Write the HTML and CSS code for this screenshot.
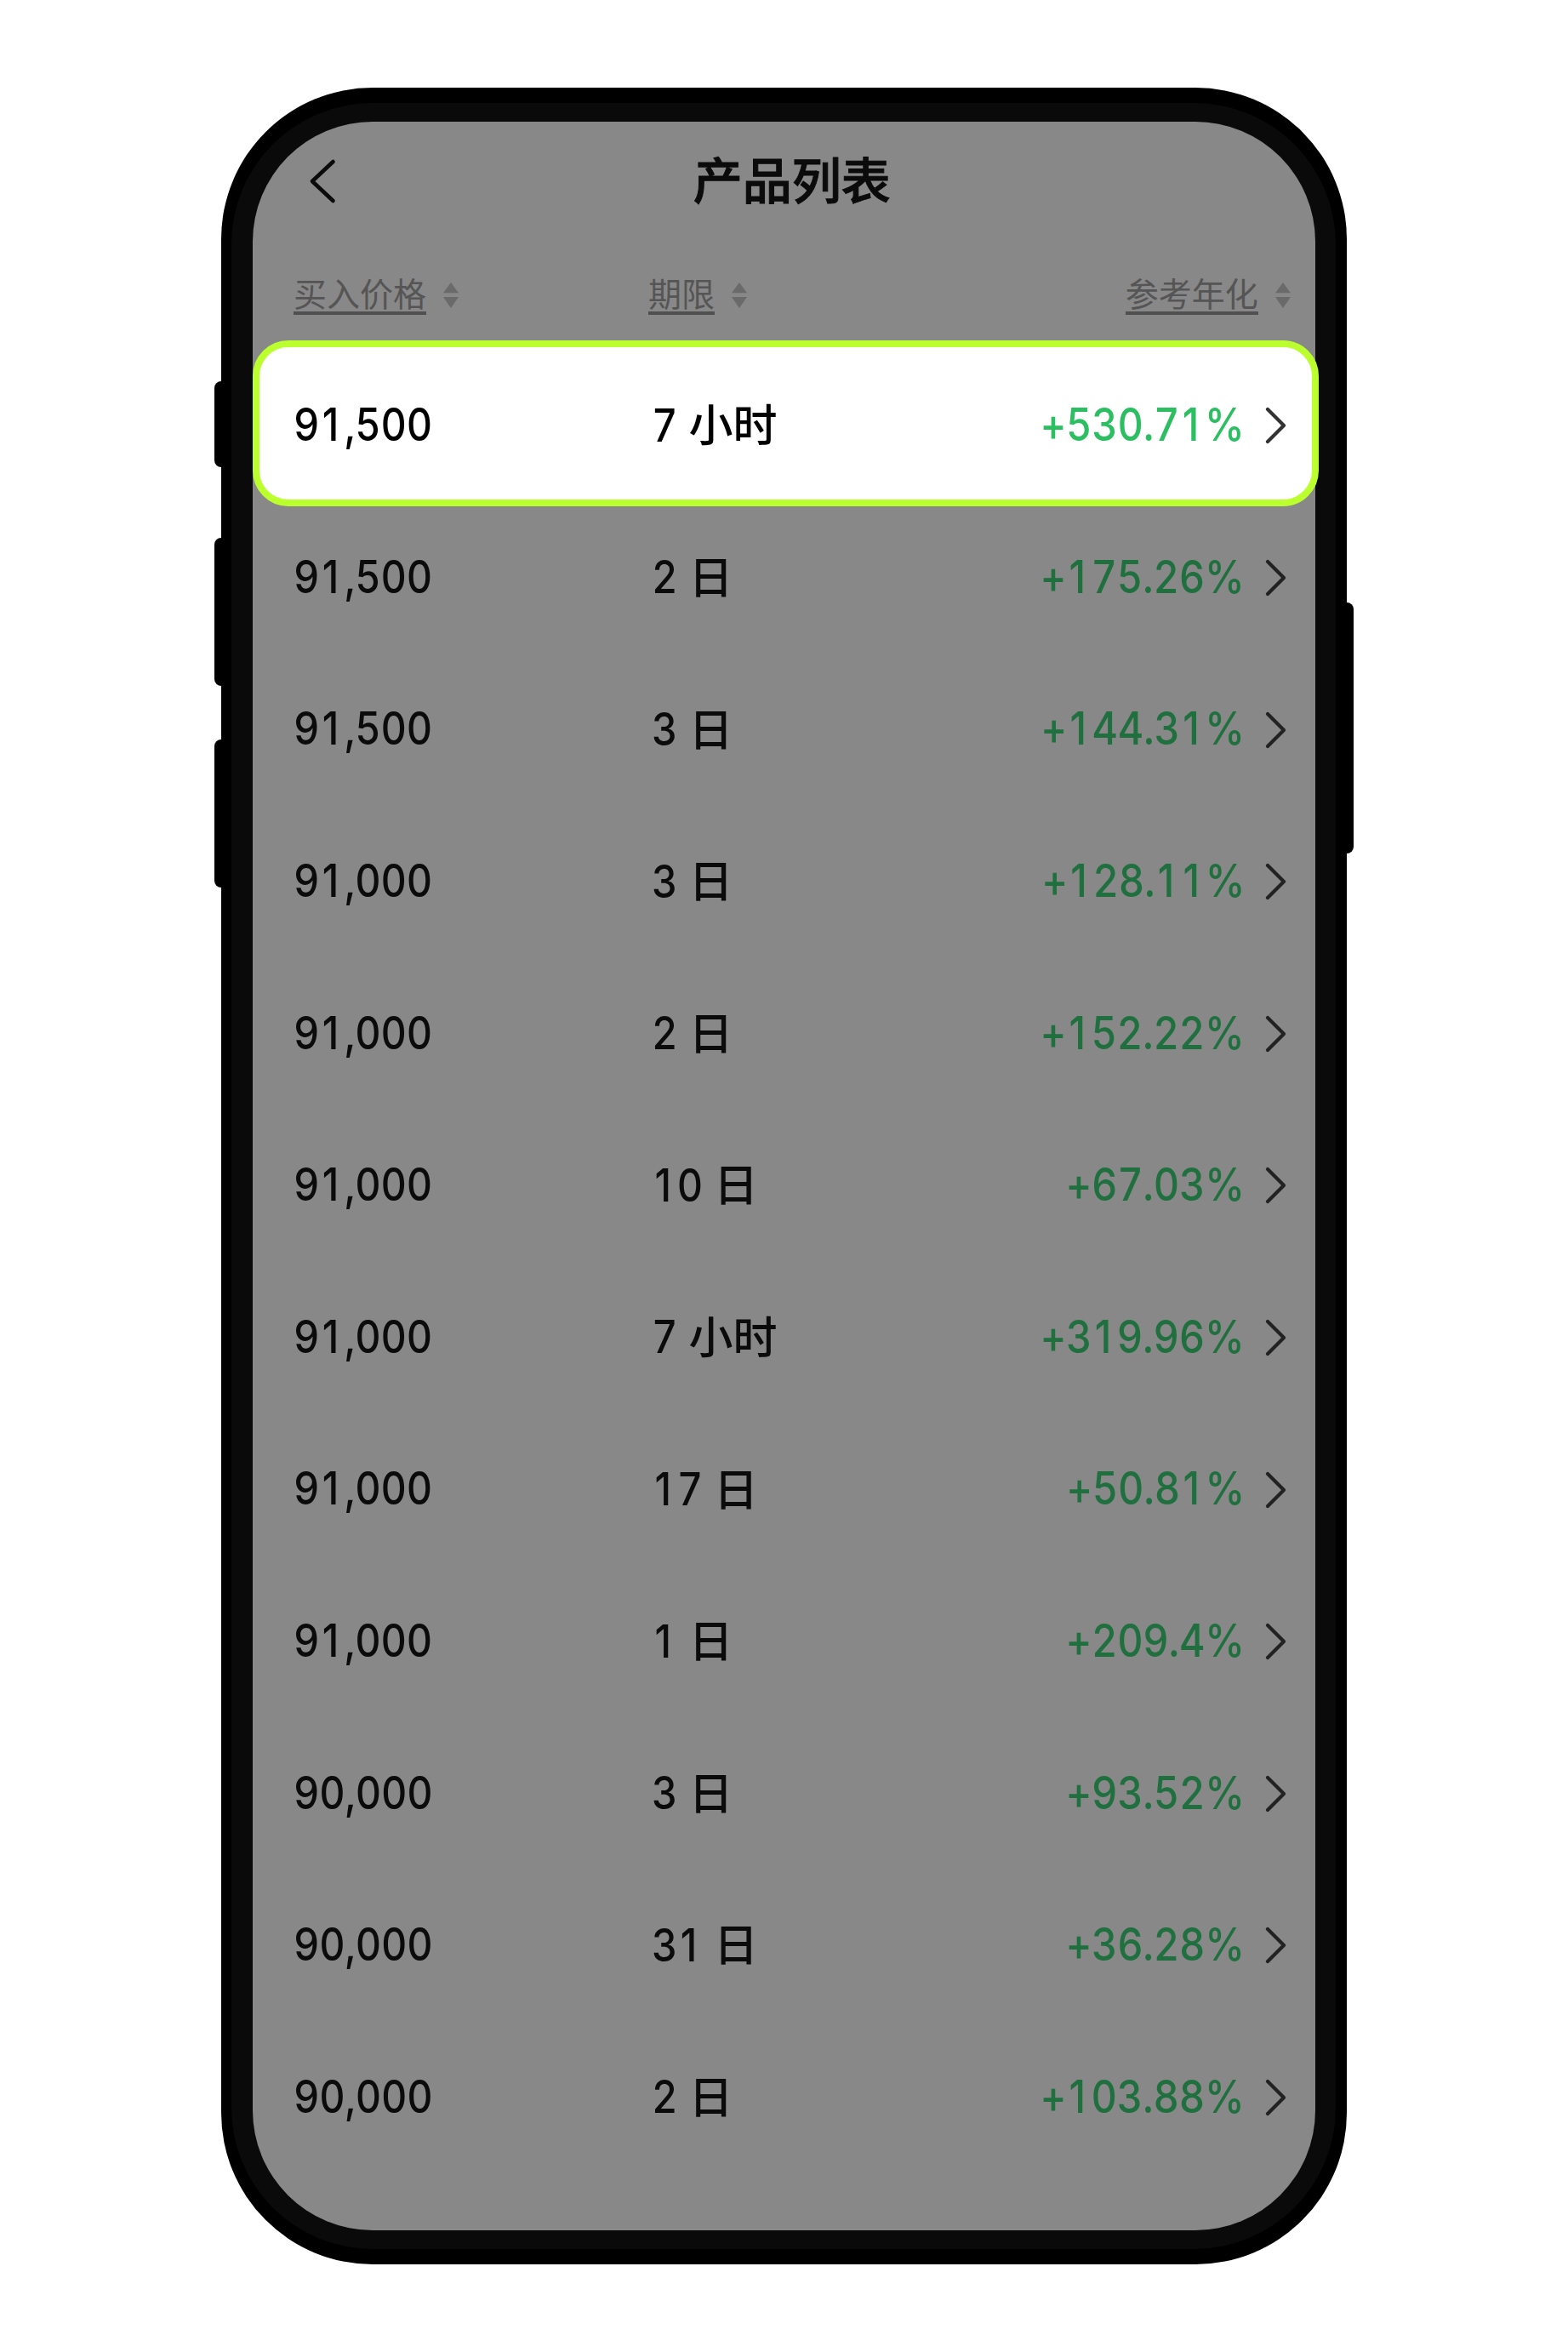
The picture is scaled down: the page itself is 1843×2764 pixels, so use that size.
FILE: index.html
```
<!DOCTYPE html>
<html lang="zh-CN">
<head>
<meta charset="utf-8">
<title>产品列表</title>
<link rel="stylesheet" href="styles.css">
</head>
<body>
<svg class="defs" aria-hidden="true">
  <symbol id="chevron" viewBox="0 0 28 46"><path d="M4 4 L23 23 L4 42"/></symbol>
  <symbol id="sort" viewBox="0 0 18 30"><path d="M9 0 L18 12.3 H0 Z M0 17 H18 L9 30 Z"/></symbol>
</svg>
<main class="phone">
  <i class="key key-mute"></i><i class="key key-up"></i><i class="key key-down"></i><i class="key key-power"></i>
  <div class="bezel">
    <div class="screen">
      <header class="bar">
        <svg class="back" viewBox="0 0 32 54"><path d="M28.5 4 L4 27 L28.5 50"/></svg>
        <h1>产品列表</h1>
      </header>
      <div class="heads">
        <div class="head"><u>买入价格</u><svg class="sort"><use href="#sort"/></svg></div>
        <div class="head"><u>期限</u><svg class="sort"><use href="#sort"/></svg></div>
        <div class="head"><u>参考年化</u><svg class="sort"><use href="#sort"/></svg></div>
      </div>
      <div class="list">
        <div class="row active"><span class="num">9<i>1</i>,500</span><span class="term"><b class="num">7</b>小时</span><span class="num rate">+530.7<i>1</i>%</span><svg class="go"><use href="#chevron"/></svg></div>
        <div class="row"><span class="num">9<i>1</i>,500</span><span class="term"><b class="num">2</b>日</span><span class="num rate">+<i>1</i>75.26%</span><svg class="go"><use href="#chevron"/></svg></div>
        <div class="row"><span class="num">9<i>1</i>,500</span><span class="term"><b class="num">3</b>日</span><span class="num rate">+<i>1</i>44.3<i>1</i>%</span><svg class="go"><use href="#chevron"/></svg></div>
        <div class="row"><span class="num">9<i>1</i>,000</span><span class="term"><b class="num">3</b>日</span><span class="num rate">+<i>1</i>28.<i>1</i><i>1</i>%</span><svg class="go"><use href="#chevron"/></svg></div>
        <div class="row"><span class="num">9<i>1</i>,000</span><span class="term"><b class="num">2</b>日</span><span class="num rate">+<i>1</i>52.22%</span><svg class="go"><use href="#chevron"/></svg></div>
        <div class="row"><span class="num">9<i>1</i>,000</span><span class="term"><b class="num two"><i>1</i>0</b>日</span><span class="num rate">+67.03%</span><svg class="go"><use href="#chevron"/></svg></div>
        <div class="row"><span class="num">9<i>1</i>,000</span><span class="term"><b class="num">7</b>小时</span><span class="num rate">+3<i>1</i>9.96%</span><svg class="go"><use href="#chevron"/></svg></div>
        <div class="row"><span class="num">9<i>1</i>,000</span><span class="term"><b class="num two"><i>1</i>7</b>日</span><span class="num rate">+50.8<i>1</i>%</span><svg class="go"><use href="#chevron"/></svg></div>
        <div class="row"><span class="num">9<i>1</i>,000</span><span class="term"><b class="num"><i>1</i></b>日</span><span class="num rate">+209.4%</span><svg class="go"><use href="#chevron"/></svg></div>
        <div class="row"><span class="num">90,000</span><span class="term"><b class="num">3</b>日</span><span class="num rate">+93.52%</span><svg class="go"><use href="#chevron"/></svg></div>
        <div class="row"><span class="num">90,000</span><span class="term"><b class="num two">3<i>1</i></b>日</span><span class="num rate">+36.28%</span><svg class="go"><use href="#chevron"/></svg></div>
        <div class="row"><span class="num">90,000</span><span class="term"><b class="num">2</b>日</span><span class="num rate">+<i>1</i>03.88%</span><svg class="go"><use href="#chevron"/></svg></div>
      </div>
    </div>
  </div>
</main>
</body>
</html>
```
FILE: styles.css
```
* { box-sizing: border-box; }
body {
  margin: 0;
  padding: 102.5px 0 0 260px;
  height: 2764px;
  overflow: hidden;
  background: #fff;
  color: #0b0b0b;
  font-family: "Noto Sans CJK SC", sans-serif;
}
.defs { position: absolute; width: 0; height: 0; }
.phone {
  position: relative;
  width: 1322.6px;
  height: 2558.6px;
  padding: 18px 12.3px;
  border-radius: 178px;
  background: #000;
}
.key { position: absolute; width: 20px; border-radius: 8px; background: #000; left: -8.5px; }
.key-mute { top: 345px; height: 101px; }
.key-up { top: 529.5px; height: 174px; }
.key-down { top: 766.5px; height: 174px; }
.key-power { left: auto; right: -8.5px; top: 605.5px; height: 294.5px; }
.bezel {
  height: 100%;
  padding: 22.5px 24.6px;
  border-radius: 166px;
  background: #0a0a0a;
  position: relative;
}
.screen { height: 100%; border-radius: 141px; background: #888; }
.bar {
  display: grid;
  grid-template-columns: 74px 1fr 117px;
  align-items: center;
  height: 138px;
  padding: 0 4px 0 66px;
}
.back { width: 32px; height: 54px; margin-top: 1px; }
.back path, #chevron path { fill: none; stroke: currentColor; stroke-linecap: round; stroke-linejoin: round; }
.back path { stroke-width: 4.6; }
#chevron path { stroke-width: 4.2; }
h1 {
  margin: 0;
  padding-bottom: 6px;
  text-align: center;
  font-size: 58px;
  line-height: 1;
  font-weight: 500;
  -webkit-text-stroke: 1px currentColor;
}
.heads {
  display: grid;
  grid-template-columns: 417px 1fr auto;
  align-items: center;
  height: 119px;
  padding: 13px 29px 0 48px;
  color: #555;
  font-size: 39px;
  line-height: 46px;
  font-weight: 400;
}
.head { display: flex; align-items: center; gap: 20px; }
.head u { text-decoration: none; border-bottom: 4px solid #505050; height: 46px; line-height: 38px; }
.sort { width: 18px; height: 30px; fill: #6a6a6a; }
.row {
  display: grid;
  grid-template-columns: 421px 1fr auto 51px;
  align-items: center;
  height: 178.6px;
  padding: 1px 32px 0 48px;
  font-size: 52px;
  font-weight: 500;
}
.active {
  height: 195.6px;
  margin: -0.5px -4px -7.3px 0;
  padding: 3px 28px 0 40px;
  border: 8.3px solid #bbff2e;
  border-radius: 42px;
  background: #fff;
  color: #000;
}
.num {
  font-family: Inter, sans-serif;
  font-size: 53.5px;
  font-weight: 500;
  font-variant-numeric: tabular-nums;
  letter-spacing: -.3px;
  line-height: 1;
  transform: scaleX(.88);
  transform-origin: left;
  white-space: nowrap;
}
/* The narrow "1" without a foot, set in a full digit cell */
.num i {
  display: inline-block;
  width: .63em;
  padding-right: .07em;
  text-align: center;
  font-style: normal;
  font-variant-numeric: proportional-nums;
}
.term { display: flex; align-items: center; gap: 14px; line-height: 1; padding-bottom: 3px; }
.term .num { width: 29.5px; position: relative; top: 2px; }
.term .two { width: 59px; }
.rate { color: #20703f; transform-origin: right; }
.active .rate { color: #2bbf62; }
.go { width: 28px; height: 46px; margin-top: 3px; justify-self: end; color: #222; }
.active .go { color: #333; }
```
